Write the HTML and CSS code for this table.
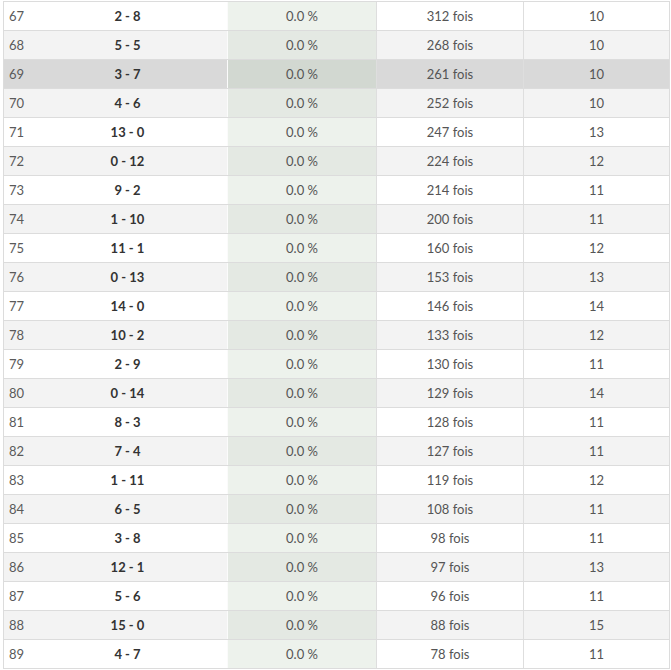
FILE: index.html
```html
<!DOCTYPE html>
<html lang="fr">
<head>
<meta charset="utf-8">
<title>Tableau</title>
<link rel="stylesheet" href="styles.css">
</head>
<body>
<div class="table">
  <div class="row"><div class="c1">67</div><div class="c2">2 - 8</div><div class="c3">0.0 %</div><div class="c4">312 fois</div><div class="c5">10</div></div>
  <div class="row"><div class="c1">68</div><div class="c2">5 - 5</div><div class="c3">0.0 %</div><div class="c4">268 fois</div><div class="c5">10</div></div>
  <div class="row hover"><div class="c1">69</div><div class="c2">3 - 7</div><div class="c3">0.0 %</div><div class="c4">261 fois</div><div class="c5">10</div></div>
  <div class="row"><div class="c1">70</div><div class="c2">4 - 6</div><div class="c3">0.0 %</div><div class="c4">252 fois</div><div class="c5">10</div></div>
  <div class="row"><div class="c1">71</div><div class="c2">13 - 0</div><div class="c3">0.0 %</div><div class="c4">247 fois</div><div class="c5">13</div></div>
  <div class="row"><div class="c1">72</div><div class="c2">0 - 12</div><div class="c3">0.0 %</div><div class="c4">224 fois</div><div class="c5">12</div></div>
  <div class="row"><div class="c1">73</div><div class="c2">9 - 2</div><div class="c3">0.0 %</div><div class="c4">214 fois</div><div class="c5">11</div></div>
  <div class="row"><div class="c1">74</div><div class="c2">1 - 10</div><div class="c3">0.0 %</div><div class="c4">200 fois</div><div class="c5">11</div></div>
  <div class="row"><div class="c1">75</div><div class="c2">11 - 1</div><div class="c3">0.0 %</div><div class="c4">160 fois</div><div class="c5">12</div></div>
  <div class="row"><div class="c1">76</div><div class="c2">0 - 13</div><div class="c3">0.0 %</div><div class="c4">153 fois</div><div class="c5">13</div></div>
  <div class="row"><div class="c1">77</div><div class="c2">14 - 0</div><div class="c3">0.0 %</div><div class="c4">146 fois</div><div class="c5">14</div></div>
  <div class="row"><div class="c1">78</div><div class="c2">10 - 2</div><div class="c3">0.0 %</div><div class="c4">133 fois</div><div class="c5">12</div></div>
  <div class="row"><div class="c1">79</div><div class="c2">2 - 9</div><div class="c3">0.0 %</div><div class="c4">130 fois</div><div class="c5">11</div></div>
  <div class="row"><div class="c1">80</div><div class="c2">0 - 14</div><div class="c3">0.0 %</div><div class="c4">129 fois</div><div class="c5">14</div></div>
  <div class="row"><div class="c1">81</div><div class="c2">8 - 3</div><div class="c3">0.0 %</div><div class="c4">128 fois</div><div class="c5">11</div></div>
  <div class="row"><div class="c1">82</div><div class="c2">7 - 4</div><div class="c3">0.0 %</div><div class="c4">127 fois</div><div class="c5">11</div></div>
  <div class="row"><div class="c1">83</div><div class="c2">1 - 11</div><div class="c3">0.0 %</div><div class="c4">119 fois</div><div class="c5">12</div></div>
  <div class="row"><div class="c1">84</div><div class="c2">6 - 5</div><div class="c3">0.0 %</div><div class="c4">108 fois</div><div class="c5">11</div></div>
  <div class="row"><div class="c1">85</div><div class="c2">3 - 8</div><div class="c3">0.0 %</div><div class="c4">98 fois</div><div class="c5">11</div></div>
  <div class="row"><div class="c1">86</div><div class="c2">12 - 1</div><div class="c3">0.0 %</div><div class="c4">97 fois</div><div class="c5">13</div></div>
  <div class="row"><div class="c1">87</div><div class="c2">5 - 6</div><div class="c3">0.0 %</div><div class="c4">96 fois</div><div class="c5">11</div></div>
  <div class="row"><div class="c1">88</div><div class="c2">15 - 0</div><div class="c3">0.0 %</div><div class="c4">88 fois</div><div class="c5">15</div></div>
  <div class="row"><div class="c1">89</div><div class="c2">4 - 7</div><div class="c3">0.0 %</div><div class="c4">78 fois</div><div class="c5">11</div></div>
</div>
</body>
</html>
```
FILE: styles.css
```css
html, body {
  margin: 0;
  padding: 0;
  background: #fff;
}

body {
  font-family: Lato, "Open Sans", sans-serif;
  font-size: 13px;
  color: #555;
}

.table {
  margin: 1px 0 0 3px;
  width: 667px;
  box-sizing: border-box;
  border-top: 1px solid #dcdcdc;
  border-left: 1px solid #dcdcdc;
  border-right: 1px solid #dcdcdc;
}

.row {
  display: grid;
  grid-template-columns: 24px 200px 149px 147px 145px;
  border-bottom: 1px solid #dcdcdc;
  background: #fff;
  line-height: 28px;
  height: 28px;
}

.row:nth-child(even) {
  background: #f3f3f3;
}

.row > div {
  box-sizing: border-box;
  white-space: nowrap;
}

.c1 {
  padding-left: 5px;
  color: #5a5a5a;
}

.c2 {
  text-align: center;
  font-weight: 700;
  color: #333;
  border-right: 1px solid #fbfbfb;
}

.c3 {
  text-align: center;
  background: #edf2ec;
  border-right: 1px solid #dedede;
}

.row:nth-child(even) .c3 {
  background: #e4e9e3;
}

.c4 {
  text-align: center;
  border-right: 1px solid #dedede;
}

.c5 {
  text-align: center;
}

.row.hover {
  background: #d9d9d9;
}

.row.hover .c3 {
  background: #d2d8d1;
}
```
